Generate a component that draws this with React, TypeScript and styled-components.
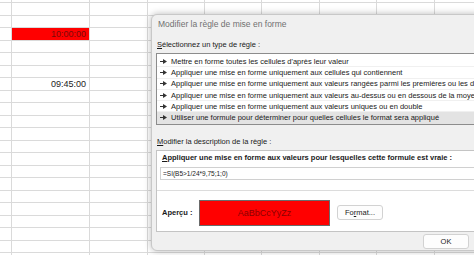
import React from "react";
import styled, { createGlobalStyle } from "styled-components";

const GlobalStyle = createGlobalStyle`
  html, body {
    margin: 0;
    padding: 0;
    background: #ffffff;
    overflow: hidden;
  }
  body {
    font-family: "Liberation Sans", Arial, sans-serif;
  }
`;

// Spreadsheet behind the dialog
const Page = styled.div`
  position: relative;
  width: 474px;
  height: 255px;
  overflow: hidden;
  background: #ffffff;
`;

const Sheet = styled.div`
  display: flex;
  flex-direction: column;
  margin-top: -9.5px;
`;

const Row = styled.div`
  display: grid;
  grid-template-columns: 12px 78px 58px 57px 57px 58px 57px 58px 57px;
  height: 12.5px;
  box-sizing: border-box;
  border-bottom: 1px solid #dadada;
`;

const Cell = styled.div<{ $fill?: string }>`
  box-sizing: border-box;
  border-right: 1px solid #dadada;
  background: ${(p) => p.$fill || "transparent"};
  color: ${(p) => (p.$fill ? "#7a0a0a" : "#222222")};
  font-size: 9px;
  line-height: 12px;
  text-align: right;
  padding-right: 3px;
  white-space: nowrap;
  overflow: hidden;
`;

// Dialog
const Dialog = styled.div`
  position: absolute;
  left: 151px;
  top: 14px;
  width: 340px;
  height: 237px;
  background: #f0f0f0;
  border: 1px solid #c8c8c8;
  border-radius: 6px;
  box-shadow: 0 0 7px rgba(0, 0, 0, 0.28);
  box-sizing: border-box;
  display: flex;
  flex-direction: column;
  padding: 0 0 0 4px;
  font-family: "Liberation Sans", Arial, sans-serif;
  color: #1a1a1a;
`;

const Title = styled.div`
  font-size: 8.5px;
  color: #707070;
  height: 18px;
  line-height: 18px;
  padding-left: 2px;
  margin-bottom: 7px;
`;

const SectionLabel = styled.div`
  font-size: 7.5px;
  line-height: 10px;
  padding-left: 1px;
  margin-bottom: 3px;
`;

const U = styled.span`
  text-decoration: underline;
`;

const ListBox = styled.div`
  background: #ffffff;
  border: 1px solid #8c8c8c;
  border-right: none;
  height: 72px;
  box-sizing: border-box;
  display: flex;
  flex-direction: column;
  padding-top: 2px;
`;

const ListItem = styled.div<{ $selected?: boolean }>`
  display: flex;
  align-items: center;
  gap: 4px;
  height: 11.3px;
  padding-left: 3px;
  font-size: 7.5px;
  white-space: nowrap;
  overflow: hidden;
  background: ${(p) => (p.$selected ? "#e3e3e3" : "transparent")};
  border-bottom: 1px solid ${(p) => (p.$selected ? "#e3e3e3" : "#f0f0f0")};
  box-sizing: border-box;

  svg {
    flex-shrink: 0;
  }
`;

const Arrow = () => (
  <svg width="7" height="5" viewBox="0 0 7 5">
    <line x1="0" y1="2.5" x2="3.5" y2="2.5" stroke="#333" strokeWidth="1" />
    <polygon points="3,0 7,2.5 3,5" fill="#333" />
  </svg>
);

const DescLabel = styled(SectionLabel)`
  margin-top: 12px;
`;

const DescBox = styled.div`
  background: #ffffff;
  border: 1px solid #c4c4c4;
  border-right: none;
  height: 82px;
  box-sizing: border-box;
  display: flex;
  flex-direction: column;
`;

const FormulaPart = styled.div`
  padding: 2px 0 0 5px;
  height: 40px;
  box-sizing: border-box;
  border-bottom: 1px solid #dcdcdc;
`;

const BoldLabel = styled.div`
  font-size: 7.5px;
  font-weight: bold;
  line-height: 10px;
  white-space: nowrap;
`;

const FormulaInput = styled.div`
  margin: 4px 0 0 -2px;
  height: 13px;
  border: 1px solid #d0d0d0;
  border-right: none;
  box-sizing: border-box;
  font-size: 6.5px;
  line-height: 11px;
  padding-left: 2px;
  white-space: nowrap;
`;

const PreviewPart = styled.div`
  display: flex;
  align-items: center;
  padding: 3px 0 0 5px;
  flex: 1;
`;

const PreviewLabel = styled(BoldLabel)`
  width: 37px;
`;

const PreviewSwatch = styled.div`
  width: 131px;
  height: 26px;
  box-sizing: border-box;
  border: 1px solid #6a6a6a;
  background: #ff0000;
  color: #8a0000;
  font-size: 9px;
  display: flex;
  align-items: center;
  justify-content: center;
`;

const Button = styled.div<{ $w: number }>`
  width: ${(p) => p.$w}px;
  height: 15px;
  box-sizing: border-box;
  background: #fdfdfd;
  border: 1px solid #d2d2d2;
  border-radius: 3px;
  font-size: 7.5px;
  display: flex;
  align-items: center;
  justify-content: center;
`;

const FormatButton = styled(Button)`
  margin-left: 7px;
`;

const Footer = styled.div`
  display: flex;
  justify-content: flex-start;
  padding: 2px 0 0 267px;
`;

const items = [
  "Mettre en forme toutes les cellules d'après leur valeur",
  "Appliquer une mise en forme uniquement aux cellules qui contiennent",
  "Appliquer une mise en forme uniquement aux valeurs rangées parmi les premières ou les dernières valeurs",
  "Appliquer une mise en forme uniquement aux valeurs au-dessus ou en dessous de la moyenne",
  "Appliquer une mise en forme uniquement aux valeurs uniques ou en double",
  "Utiliser une formule pour déterminer pour quelles cellules le format sera appliqué",
];

const ROWS = 22;

export default function App() {
  return (
    <Page>
      <GlobalStyle />
      <Sheet>
        {Array.from({ length: ROWS }).map((_, r) => (
          <Row key={r}>
            {Array.from({ length: 9 }).map((__, c) => {
              if (r === 3 && c === 1) {
                return (
                  <Cell key={c} $fill="#ff0000">
                    10:00:00
                  </Cell>
                );
              }
              if (r === 7 && c === 1) {
                return <Cell key={c}>09:45:00</Cell>;
              }
              return <Cell key={c} />;
            })}
          </Row>
        ))}
      </Sheet>

      <Dialog>
        <Title>Modifier la règle de mise en forme</Title>
        <SectionLabel>
          <U>S</U>électionnez un type de règle :
        </SectionLabel>
        <ListBox>
          {items.map((t, i) => (
            <ListItem key={t} $selected={i === items.length - 1}>
              <Arrow />
              {t}
            </ListItem>
          ))}
        </ListBox>
        <DescLabel>
          <U>M</U>odifier la description de la règle :
        </DescLabel>
        <DescBox>
          <FormulaPart>
            <BoldLabel>
              <U>A</U>ppliquer une mise en forme aux valeurs pour lesquelles cette formule est vraie :
            </BoldLabel>
            <FormulaInput>=SI(B5&gt;1/24*9,75;1;0)</FormulaInput>
          </FormulaPart>
          <PreviewPart>
            <PreviewLabel>Aperçu :</PreviewLabel>
            <PreviewSwatch>AaBbCcYyZz</PreviewSwatch>
            <FormatButton $w={46}>
              Fo<U>r</U>mat...
            </FormatButton>
          </PreviewPart>
        </DescBox>
        <Footer>
          <Button $w={46}>OK</Button>
        </Footer>
      </Dialog>
    </Page>
  );
}
